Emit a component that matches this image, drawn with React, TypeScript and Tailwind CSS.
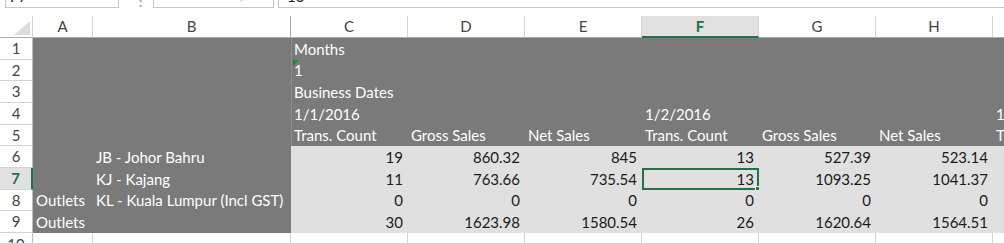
import React from "react";

const font = { fontFamily: "Lato, 'Open Sans', sans-serif" };

type Cell = { t?: string; r?: boolean };

const rowHeights = [22, 21, 22, 22, 21, 22, 22, 21, 22];

const rows: Cell[][] = [
  [{}, {}, { t: "Months" }, {}, {}, {}, {}, {}, {}],
  [{}, {}, { t: "1" }, {}, {}, {}, {}, {}, {}],
  [{}, {}, { t: "Business Dates" }, {}, {}, {}, {}, {}, {}],
  [{}, {}, { t: "1/1/2016" }, {}, {}, { t: "1/2/2016" }, {}, {}, { t: "1/3/2016" }],
  [
    {},
    {},
    { t: "Trans. Count" },
    { t: "Gross Sales" },
    { t: "Net Sales" },
    { t: "Trans. Count" },
    { t: "Gross Sales" },
    { t: "Net Sales" },
    { t: "Trans. Count" },
  ],
  [{}, { t: "JB - Johor Bahru" }, { t: "19", r: true }, { t: "860.32", r: true }, { t: "845", r: true }, { t: "13", r: true }, { t: "527.39", r: true }, { t: "523.14", r: true }, {}],
  [{}, { t: "KJ - Kajang" }, { t: "11", r: true }, { t: "763.66", r: true }, { t: "735.54", r: true }, { t: "13", r: true }, { t: "1093.25", r: true }, { t: "1041.37", r: true }, {}],
  [{ t: "Outlets" }, { t: "KL - Kuala Lumpur (Incl GST)" }, { t: "0", r: true }, { t: "0", r: true }, { t: "0", r: true }, { t: "0", r: true }, { t: "0", r: true }, { t: "0", r: true }, {}],
  [{ t: "Outlets" }, {}, { t: "30", r: true }, { t: "1623.98", r: true }, { t: "1580.54", r: true }, { t: "26", r: true }, { t: "1620.64", r: true }, { t: "1564.51", r: true }, {}],
];

const letters = ["A", "B", "C", "D", "E", "F", "G", "H", "I"];
const GRID = "grid grid-cols-[33px_60px_198px_117px_117px_117px_117px_117px_117px_117px]";

export default function App() {
  return (
    <div className="w-[1004px] h-[243px] overflow-hidden bg-white text-[15px]" style={font}>
      {/* formula bar (cut off) */}
      <div className="relative h-[16px] overflow-hidden flex bg-white">
        <div className="ml-[5px] mt-[-14px] h-[22px] w-[114px] border border-[#c6c6c6] px-[4px] pt-[2px] leading-[15px] text-[#222]">F7</div>
        <div className="ml-[14px] mt-[-14px] h-[22px] w-[8px] text-[#9a9a9a] leading-[15px] pt-[6px]">⋮</div>
        <div className="ml-[12px] mt-[-14px] h-[22px] w-[121px] border border-[#c6c6c6] flex items-end pb-[5px] text-[#b5b5b5] text-[13px] leading-[13px]">
          <span className="ml-[10px]">✕</span>
          <span className="ml-[28px]">✓</span>
          <span className="ml-[26px] italic">fx</span>
        </div>
        <div className="ml-[4px] mt-[-14px] h-[22px] flex-1 border border-[#c6c6c6] border-r-0 px-[8px] pt-[2px] leading-[15px] text-[#222]">13</div>
      </div>

      {/* column headers */}
      <div className={GRID + " h-[22px]"}>
        <div className="relative border-b border-[#ababab] border-r border-r-[#d4d4d4]">
          <svg className="absolute left-[14px] top-[5px]" width="16" height="14" viewBox="0 0 16 14">
            <polygon points="16,0 16,14 0,14" fill="#dcdcdc" />
          </svg>
        </div>
        {letters.map((l, i) => {
          const sel = l === "F";
          return (
            <div
              key={l}
              className={
                "flex items-center justify-center border-r " +
                (i === 1 ? "border-r-[#a8a8a8] " : "border-r-[#d4d4d4] ") +
                (sel
                  ? "bg-[#e1e1e1] border-b-2 border-b-[#217346] text-[#217346] font-bold"
                  : "border-b border-b-[#ababab] text-[#444]")
              }
            >
              <span className="leading-none">{l}</span>
            </div>
          );
        })}
      </div>

      {/* body rows */}
      {rows.map((row, ri) => {
        const h = rowHeights[ri];
        const isSel = ri === 6;
        return (
          <div key={ri} className={GRID} style={{ height: h }}>
            <div
              className={
                "flex items-center justify-center border-b border-[#d4d4d4] " +
                (isSel
                  ? "bg-[#e1e1e1] text-[#217346] font-bold border-r-2 border-r-[#217346]"
                  : "text-[#444] border-r border-r-[#bdbdbd]")
              }
            >
              <span className="leading-none">{ri + 1}</span>
            </div>
            {row.map((c, ci) => {
              const dark = ri < 5 || ci < 2;
              const selCell = ri === 6 && ci === 5;
              return (
                <div
                  key={ci}
                  className={
                    "relative flex items-end pb-[1px] whitespace-nowrap px-[3px] leading-[19px] " +
                    (dark ? "bg-[#7a7a7a] text-white " : "bg-[#e0e0e0] text-[#1a1a1a] ") +
                    (c.r ? "justify-end pr-[5px] " : "") +
                    (ci === 2 && ri < 5 ? "border-l border-l-[#8c8c8c] pl-[2px] " : "")
                  }
                >
                  <span>{c.t ?? ""}</span>
                  {ri === 1 && ci === 2 && (
                    <svg className="absolute left-[1px] top-0" width="6" height="6" viewBox="0 0 6 6">
                      <polygon points="0,0 6,0 0,6" fill="#1a8a2a" />
                    </svg>
                  )}
                  {selCell && (
                    <div className="absolute left-0 top-0 right-0 bottom-0 border-2 border-[#217346]">
                      <div className="absolute right-[-4px] bottom-[-4px] w-[6px] h-[6px] bg-[#217346] border border-white" />
                    </div>
                  )}
                </div>
              );
            })}
          </div>
        );
      })}

      {/* row 10 (partially visible) */}
      <div className={GRID + " h-[22px]"}>
        <div className="flex items-center justify-center text-[#444] border-r border-[#bdbdbd]">
          <span className="leading-none">10</span>
        </div>
        {letters.map((l) => (
          <div key={l} className="border-r border-[#d4d4d4]" />
        ))}
      </div>
    </div>
  );
}
